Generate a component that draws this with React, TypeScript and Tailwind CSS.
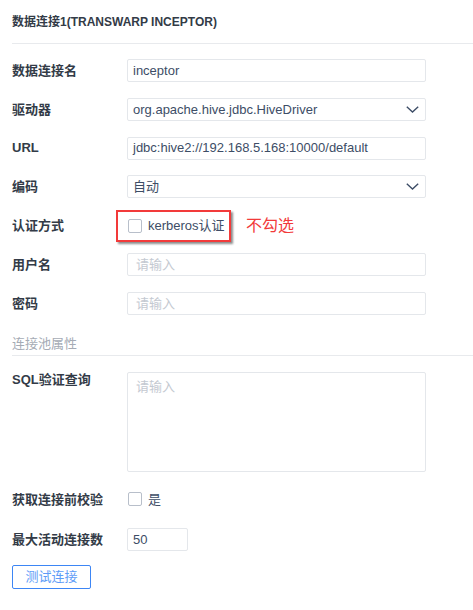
import React from 'react';

const font = { fontFamily: '"Liberation Sans", "Noto Sans CJK SC", sans-serif' };

function Chevron() {
  return (
    <svg width="13" height="7" viewBox="0 0 13 7" fill="none" className="shrink-0">
      <polyline points="0.8,0.8 6.5,6 12.2,0.8" stroke="#3d4d66" strokeWidth="1.4" />
    </svg>
  );
}

function Box() {
  return <span className="w-[14px] h-[14px] rounded-[2px] border border-[#b8bfca] bg-white shrink-0" />;
}

function Row({ label, children, top = false }: { label: string; children: React.ReactNode; top?: boolean }) {
  return (
    <div className={top ? 'flex items-start' : 'flex items-center h-[23px]'}>
      <div className={`w-[115px] shrink-0 text-[13px] font-semibold text-[#333b47] ${top ? 'leading-[16px]' : ''}`}>
        {label}
      </div>
      {children}
    </div>
  );
}

function Field({ value, placeholder, select = false, w = 'w-[299px]' }: { value?: string; placeholder?: string; select?: boolean; w?: string }) {
  return (
    <div className={`${w} h-[23px] border border-[#e4e7eb] rounded-[2px] flex items-center justify-between pr-[6px] ${value ? 'pl-[5px]' : 'pl-[8px]'}`}>
      {value ? (
        <span className="text-[13px] text-[#3d4d66]">{value}</span>
      ) : (
        <span className="text-[13px] text-[#c4c9d1]">{placeholder}</span>
      )}
      {select && <Chevron />}
    </div>
  );
}

export default function App() {
  return (
    <div className="w-[473px] h-[610px] bg-white pl-3 pt-[1px]" style={font}>
      <div className="h-[43px] flex items-center border-b border-[#e8eaed]">
        <span className="text-[12px] font-bold text-[#333b47]">数据连接1(TRANSWARP INCEPTOR)</span>
      </div>

      <div className="flex flex-col gap-[15.8px] mt-[15px]">
        <Row label="数据连接名">
          <Field value="inceptor" />
        </Row>
        <Row label="驱动器">
          <Field value="org.apache.hive.jdbc.HiveDriver" select />
        </Row>
        <Row label="URL">
          <Field value="jdbc:hive2://192.168.5.168:10000/default" />
        </Row>
        <Row label="编码">
          <Field value="自动" select />
        </Row>
        <Row label="认证方式">
          <div className="-ml-[11px] flex items-center">
            <div className="w-[115px] h-[32px] border-2 border-[#f23a3a] shadow-[2px_2px_2px_rgba(0,0,0,0.45)] flex items-center gap-[6px] pl-[10px]">
              <Box />
              <span className="text-[13px] text-[#3d4d66]">kerberos认证</span>
            </div>
            <span className="ml-[15px] text-[16px] text-[#f23a3a]">不勾选</span>
          </div>
        </Row>
        <Row label="用户名">
          <Field placeholder="请输入" />
        </Row>
        <Row label="密码">
          <Field placeholder="请输入" />
        </Row>
      </div>

      <div className="mt-[19px] h-[22px] border-b border-[#e8eaed] text-[13px] text-[#a5abb5]">连接池属性</div>

      <div className="flex flex-col mt-[16px]">
        <Row label="SQL验证查询" top>
          <div className="w-[299px] h-[100px] border border-[#e4e7eb] rounded-[2px] pl-[8px] pt-[4px] text-[13px] text-[#c4c9d1]">
            请输入
          </div>
        </Row>
        <div className="mt-[16px]">
          <Row label="获取连接前校验">
            <div className="flex items-center gap-[6px] pl-[1px]">
              <Box />
              <span className="text-[13px] text-[#3d4d66]">是</span>
            </div>
          </Row>
        </div>
        <div className="mt-[17px]">
          <Row label="最大活动连接数">
            <Field value="50" w="w-[61px]" />
          </Row>
        </div>
        <button className="mt-[14px] w-[79px] h-[24px] border border-[#3d86f5] rounded-[2px] text-[13px] text-[#5d9cf7] bg-white flex items-center justify-center">
          测试连接
        </button>
      </div>
    </div>
  );
}
